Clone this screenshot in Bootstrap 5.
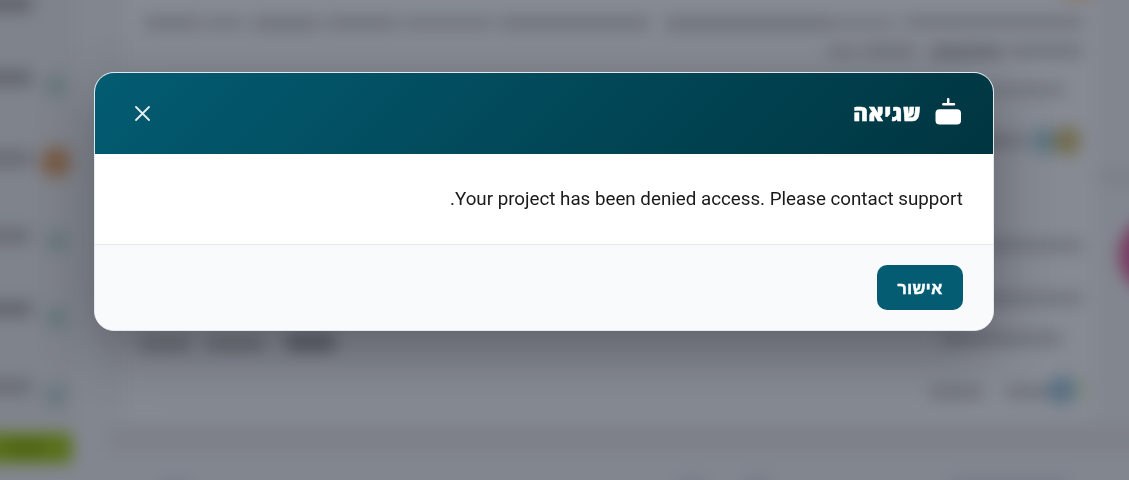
<!DOCTYPE html>
<html lang="he" dir="rtl">
<head>
<meta charset="utf-8">
<meta name="viewport" content="width=device-width, initial-scale=1">
<title>שגיאה</title>
<link href="https://cdn.jsdelivr.net/npm/bootstrap@5.3.0/dist/css/bootstrap.min.css" rel="stylesheet">
<style>
body { height: 480px; overflow: hidden; background: #82868f; font-family: Roboto, "Open Sans", "Liberation Sans", sans-serif; }
.page-behind { position: fixed; inset: 0; width: 1129px; height: 480px; }
.alert-window { margin: 72px 135px 0 auto; width: 900px; max-width: none; }
.alert-window .modal-content { border: 1px solid #e2e8f0; border-radius: 20px; overflow: hidden; background: #fff; box-shadow: 0 20px 60px rgba(0,0,0,.3); }
.alert-window .modal-header { height: 81px; padding: 0 30px; border: 0; border-radius: 0; background: linear-gradient(135deg, #035c72 0%, #003540 100%); }
.alert-window .modal-title { margin-right: 12px; padding-bottom: 2px; font: 800 22.4px/1.5 "Open Sans", sans-serif; letter-spacing: .5px; -webkit-text-stroke: .5px #fff; }
.close-x { width: 36px; height: 36px; opacity: .9; }
.alert-window .modal-body { flex: none; height: 90px; padding: 0 30px; font-size: 18.75px; color: #1a1a1a; }
.alert-window .modal-footer { height: 86px; padding: 0 30px; border-top: 1px solid #e2e8f0; border-radius: 0; background: #f8fafc; }
.btn-confirm { width: 86px; height: 45px; border-radius: 10px; font: 700 16px/1 "Liberation Sans", sans-serif; letter-spacing: .5px; -webkit-text-stroke: .5px #fff; --bs-btn-color: #fff; --bs-btn-bg: #035c72; --bs-btn-hover-color: #fff; --bs-btn-hover-bg: #034a5b; }
.btn-confirm span { display: block; padding-top: 2px; }
</style>
</head>
<body>
<svg class="page-behind" viewBox="0 0 1129 480" aria-hidden="true">
  <defs>
    <filter id="soft" x="-50" y="-50" width="1229" height="580" filterUnits="userSpaceOnUse" color-interpolation-filters="sRGB"><feGaussianBlur stdDeviation="8"/></filter>
  </defs>
  <rect width="1129" height="480" fill="#82868f"/>
  <g filter="url(#soft)">
    <rect x="-70" y="-70" width="1270" height="620" fill="#82868f"/>
    <rect x="-30" y="-30" width="106" height="455" fill="#7f838b"/>
    <rect x="125" y="-30" width="970" height="450" fill="#868a93"/>
    <rect x="110" y="426" width="1030" height="26" fill="#7d8088"/>
    <rect x="1098" y="170" width="60" height="14" fill="#7b7f87"/>
    <g fill="#696c74">
      <rect x="-20" y="-4" width="52" height="16" fill="#5e6169"/>
      <rect x="-20" y="70" width="52" height="16" fill="#62656c"/>
      <rect x="-20" y="150" width="52" height="17"/>
      <rect x="-20" y="228" width="50" height="16"/>
      <rect x="-20" y="301" width="52" height="16" fill="#62656c"/>
      <rect x="-20" y="379" width="52" height="15"/>
    </g>
    <g fill="#6d7079">
      <rect x="144" y="17" width="56" height="12"/><rect x="204" y="18" width="40" height="10"/><rect x="252" y="17" width="67" height="13"/>
      <rect x="325" y="17" width="72" height="12"/><rect x="402" y="18" width="92" height="10"/><rect x="500" y="17" width="150" height="12"/>
      <rect x="665" y="17" width="165" height="13"/><rect x="830" y="19" width="66" height="9"/><rect x="904" y="17" width="179" height="11"/>
      <rect x="828" y="46" width="28" height="11"/><rect x="862" y="45" width="54" height="12"/><rect x="930" y="45" width="73" height="14" fill="#686b74"/><rect x="1009" y="45" width="73" height="12"/>
      <rect x="980" y="85" width="84" height="10"/><rect x="966" y="135" width="60" height="12"/>
      <rect x="970" y="240" width="112" height="11"/><rect x="970" y="293" width="112" height="11"/>
      <rect x="942" y="333" width="120" height="12"/>
      <rect x="930" y="386" width="52" height="12"/><rect x="1006" y="386" width="50" height="12"/>
      <rect x="139" y="337" width="51" height="14"/><rect x="207" y="337" width="57" height="14"/><rect x="286" y="334" width="49" height="17" fill="#5e616a"/>
    </g>
    <g fill="#62737a">
      <circle cx="56" cy="86" r="10"/><circle cx="57" cy="241" r="10"/><circle cx="56" cy="318" r="10"/><circle cx="56" cy="395" r="10"/>
    </g>
    <circle cx="56" cy="162" r="15" fill="#785a45"/>
    <rect x="-30" y="433" width="102" height="30" rx="5" fill="#587018"/>
    <rect x="8" y="442" width="36" height="12" fill="#4c600f"/>
    <circle cx="1044" cy="141" r="13" fill="#5c7482"/><circle cx="1067" cy="141" r="14" fill="#726c4e"/>
    <circle cx="1062" cy="390" r="14" fill="#587082"/><rect x="1079" y="380" width="7" height="20" fill="#7b876f"/>
    <circle cx="1158" cy="255" r="39" fill="#783860"/>
    <rect x="1064" y="-17" width="27" height="15" fill="#88735e"/>
    <g fill="#727985"><rect x="160" y="481" width="30" height="12"/><rect x="677" y="479" width="30" height="12"/><rect x="744" y="478" width="28" height="12"/><rect x="950" y="479" width="120" height="12"/></g>
  </g>
</svg>

<div class="modal-dialog alert-window" role="dialog" aria-modal="true" aria-labelledby="alertTitle">
  <div class="modal-content">
    <div class="modal-header d-flex align-items-center justify-content-between text-white">
      <div class="d-flex align-items-center">
        <svg width="30" height="30" viewBox="0 0 30 30" fill="#fff" aria-hidden="true">
          <rect x="2.500" y="11.200" width="25.500" height="15.300" rx="4"/>
          <path d="M15.200 1.200v5M10.300 6.200h10.700" fill="none" stroke="#fff" stroke-width="2.500" stroke-linecap="round"/>
        </svg>
        <h5 class="modal-title" id="alertTitle">שגיאה</h5>
      </div>
      <button type="button" class="btn close-x p-0 d-flex align-items-center justify-content-center border-0" aria-label="סגירה">
        <svg width="16" height="16" viewBox="0 0 16 16" stroke="#fff" stroke-width="1.800" stroke-linecap="round" aria-hidden="true"><path d="M1 1l13 13M14 1l-13 13"/></svg>
      </button>
    </div>
    <div class="modal-body d-flex align-items-center"><p class="m-0">Your project has been denied access. Please contact support.</p></div>
    <div class="modal-footer d-flex align-items-center justify-content-start">
      <button type="button" class="btn btn-confirm m-0 p-0"><span>אישור</span></button>
    </div>
  </div>
</div>
<script src="https://cdn.jsdelivr.net/npm/bootstrap@5.3.0/dist/js/bootstrap.bundle.min.js"></script>
</body>
</html>
